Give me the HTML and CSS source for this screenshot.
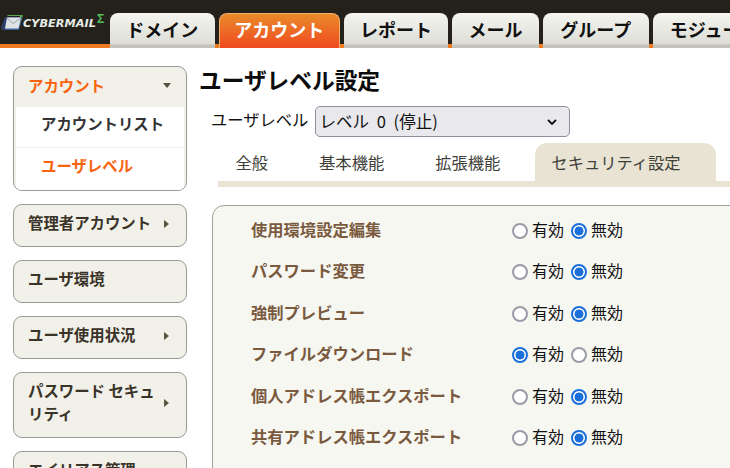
FILE: index.html
```html
<!DOCTYPE html>
<html lang="ja">
<head>
<meta charset="utf-8">
<title>ユーザレベル設定</title>
<link rel="stylesheet" href="styles.css">
</head>
<body>
<header class="topbar">
  <div class="logo">
    <svg class="logo-icon" viewBox="0 0 22 16" width="22" height="16" aria-hidden="true">
      <path d="M6 0H22L19 11H17L19 1H7Z" fill="#58a84e"/>
      <path d="M4 2H21L18 15H1Z" fill="#3f5f9a"/>
      <path d="M0 12L4 2H6L4 15H1Z" fill="#2f3c66"/>
      <path d="M6 2.500H20L17.500 13.500H4Z" fill="#dfe3e6"/>
      <path d="M6 3L12 8.500L20 3" fill="none" stroke="#9aa2ac" stroke-width="1"/>
    </svg>
    <span class="logo-text">CYBERMAIL</span><span class="logo-sigma">Σ</span>
  </div>
  <nav class="main-tabs">
    <a class="main-tab tab-domain">ドメイン</a>
    <a class="main-tab is-active tab-account">アカウント</a>
    <a class="main-tab tab-report">レポート</a>
    <a class="main-tab tab-mail">メール</a>
    <a class="main-tab tab-group">グループ</a>
    <a class="main-tab tab-module">モジュール</a>
  </nav>
</header>
<div class="page">
  <aside class="sidebar">
    <section class="side-card open">
      <div class="side-head">
        <span class="side-title orange">アカウント</span><span class="arrow-down"></span>
      </div>
      <a class="side-item">アカウントリスト</a>
      <a class="side-item current">ユーザレベル</a>
    </section>
    <section class="side-card"><div class="side-head"><span class="side-title">管理者アカウント</span><span class="arrow-right"></span></div></section>
    <section class="side-card"><div class="side-head"><span class="side-title">ユーザ環境</span></div></section>
    <section class="side-card"><div class="side-head"><span class="side-title">ユーザ使用状況</span><span class="arrow-right"></span></div></section>
    <section class="side-card"><div class="side-head"><span class="side-title">パスワード セキュリティ</span><span class="arrow-right"></span></div></section>
    <section class="side-card"><div class="side-head"><span class="side-title">エイリアス管理</span></div></section>
  </aside>
  <main class="content">
    <h1 class="title">ユーザレベル設定</h1>
    <div class="level-row">
      <label class="level-label" for="level">ユーザレベル</label>
      <div class="select-wrap">
        <select class="level-select" id="level"><option>レベル 0 (停止)</option></select>
        <svg class="chevron" viewBox="0 0 10 6" width="10" height="6" aria-hidden="true"><path d="M1 1L5 5L9 1" fill="none" stroke="#111" stroke-width="1.800"/></svg>
      </div>
    </div>
    <div class="sub-tabs">
      <a class="sub-tab">全般</a>
      <a class="sub-tab">基本機能</a>
      <a class="sub-tab">拡張機能</a>
      <a class="sub-tab active">セキュリティ設定</a>
    </div>
    <div class="panel">
      <div class="row"><span class="row-label">使用環境設定編集</span><label class="opt"><input type="radio" name="a">有効</label><label class="opt"><input type="radio" name="a" checked>無効</label></div>
      <div class="row"><span class="row-label">パスワード変更</span><label class="opt"><input type="radio" name="b">有効</label><label class="opt"><input type="radio" name="b" checked>無効</label></div>
      <div class="row"><span class="row-label">強制プレビュー</span><label class="opt"><input type="radio" name="c">有効</label><label class="opt"><input type="radio" name="c" checked>無効</label></div>
      <div class="row"><span class="row-label">ファイルダウンロード</span><label class="opt"><input type="radio" name="d" checked>有効</label><label class="opt"><input type="radio" name="d">無効</label></div>
      <div class="row"><span class="row-label">個人アドレス帳エクスポート</span><label class="opt"><input type="radio" name="e">有効</label><label class="opt"><input type="radio" name="e" checked>無効</label></div>
      <div class="row"><span class="row-label">共有アドレス帳エクスポート</span><label class="opt"><input type="radio" name="f">有効</label><label class="opt"><input type="radio" name="f" checked>無効</label></div>
    </div>
  </main>
</div>
</body>
</html>
```
FILE: styles.css
```css
* { box-sizing: border-box; }
html, body { height: 468px; overflow: hidden; }
body {
  margin: 0;
  background: #fff;
  font-family: "Noto Sans CJK JP", "Noto Sans", sans-serif;
  color: #111;
}
.topbar {
  height: 48px;
  background: linear-gradient(#23211a 0, #23211a 44px, #f07a22 44px, #f07a22 48px);
  display: flex;
  overflow: hidden;
}
.logo {
  width: 110px;
  flex: none;
  display: flex;
  align-items: flex-start;
  padding: 15px 0 0 1px;
}
.logo-icon { flex: none; }
.logo-text {
  margin: 2px 0 0 0;
  font: italic 700 11.300px/13px "DejaVu Sans", sans-serif;
  color: #e8ece8;
}
.logo-sigma {
  margin-left: 1px;
  font: 700 12px/9px "Liberation Sans", sans-serif;
  color: #55c060;
}
.main-tabs {
  display: flex;
  gap: 4.200px;
  padding-top: 13px;
}
.main-tab {
  flex: none;
  height: 35px;
  border-radius: 8px 8px 0 0;
  background: linear-gradient(#f5f5f1, #deded7 88%, #c4c3ba 92%);
  color: #111;
  font-size: 18px;
  font-weight: 700;
  line-height: 32px;
  text-align: center;
  white-space: nowrap;
}
.tab-domain { width: 104.500px; }
.tab-account { width: 121px; }
.tab-report { width: 104.300px; }
.tab-mail { width: 86.500px; }
.tab-group { width: 105.500px; }
.tab-module { width: 120px; text-align: left; padding-left: 17px; }
.main-tab.is-active {
  background: linear-gradient(#e98a2a, #f04a20);
  color: #fff;
  border: 1px solid #f0b070;
  border-bottom: 0;
  line-height: 30px;
}
.page {
  display: flex;
  align-items: flex-start;
}
.sidebar {
  width: 174px;
  margin: 18px 0 0 13px;
  flex: none;
  display: flex;
  flex-direction: column;
  gap: 13px;
}
.side-card {
  border: 1px solid #999a94;
  border-radius: 9px;
  background: #f1f0e9;
  overflow: hidden;
}
.side-head {
  display: flex;
  align-items: center;
  justify-content: space-between;
  padding: 6px 17px 12px 14px;
}
.open .side-head { height: 40px; padding-top: 7px; padding-bottom: 10px; padding-right: 11px; }
.side-title {
  font-size: 15.400px;
  font-weight: 700;
  line-height: 23px;
  color: #3a3328;
  flex: 1;
}
.side-title.orange { color: #f8640e; }
.arrow-down {
  width: 0; height: 0;
  margin: 0 4px 0 0;
  border-left: 4.500px solid transparent;
  border-right: 4.500px solid transparent;
  border-top: 5px solid #55503f;
}
.arrow-right {
  width: 0; height: 0;
  margin: 2px 0 0 3px;
  border-top: 4.500px solid transparent;
  border-bottom: 4.500px solid transparent;
  border-left: 5px solid #55583f;
}
.side-item {
  display: block;
  height: 40px;
  margin: 0 2px;
  background: #fff;
  font-size: 15.400px;
  font-weight: 700;
  line-height: 33px;
  padding-left: 25px;
  color: #333;
}
.side-item + .side-item { border-top: 1px solid #f1f0e9; height: 43px; line-height: 34px; }
.side-item.current { color: #f8640e; }
.content {
  flex: 1;
  min-width: 0;
  padding: 0 0 0 13px;
}
.title {
  margin: 16px 0 0 -1px;
  font-size: 22.700px;
  font-weight: 700;
  line-height: 32px;
  color: #0c0c0c;
}
.level-row {
  display: flex;
  align-items: center;
  padding-left: 11px;
  margin-top: 10px;
  gap: 6.200px;
}
.level-label { font-size: 16.300px; line-height: 27px; height: 31px; color: #111; }
.select-wrap {
  position: relative;
  width: 255px;
  height: 31px;
}
.level-select {
  appearance: none;
  display: block;
  width: 100%;
  height: 31px;
  border: 1px solid #8f8f9d;
  border-radius: 5px;
  background-color: #e9e9ed;
  color: #111;
  font: 16.500px "Noto Sans CJK JP", sans-serif;
  word-spacing: 4px;
  padding: 0 0 2px 4px;
}
.chevron {
  position: absolute;
  right: 13px;
  top: 13px;
  pointer-events: none;
}
.sub-tabs {
  display: flex;
  gap: 18px;
  margin: 6px 0 0 18px;
  padding-left: 1px;
  height: 44px;
  border-bottom: 6px solid #e8e3d2;
}
.sub-tab {
  padding: 0 16.500px;
  font-size: 16.300px;
  line-height: 38px;
  color: #3f3f3a;
  white-space: nowrap;
}
.sub-tab.active {
  width: 181px;
  height: 38px;
  background: #e8e3d2;
  border-radius: 12px 12px 0 0;
}
.panel {
  margin: 18px 0 0 12px;
  width: 540px;
  height: 300px;
  padding: 3.400px 0 0 38px;
  background: #f7f7f2;
  border: 1px solid #a3a39c;
  border-radius: 12px 0 0 0;
}
.row {
  height: 41.400px;
  display: flex;
  align-items: center;
}
.row-label {
  width: 261px;
  padding-bottom: 2px;
  font-size: 16.300px;
  font-weight: 700;
  color: #7a5a3e;
  white-space: nowrap;
}
.opt {
  display: flex;
  align-items: center;
  padding-bottom: 2px;
  font-size: 16px;
  color: #111;
  width: 59px;
  white-space: nowrap;
}
.opt input {
  appearance: none;
  width: 16px;
  height: 16px;
  margin: 4px 4px 0 0;
  flex: none;
  border: 2px solid #9b9ba8;
  border-radius: 50%;
  background: #fff;
}
.opt input:checked {
  border-color: #1a6fdb;
  background: radial-gradient(circle, #1a6fdb 0, #1a6fdb 4.200px, #fff 4.800px);
}
```
